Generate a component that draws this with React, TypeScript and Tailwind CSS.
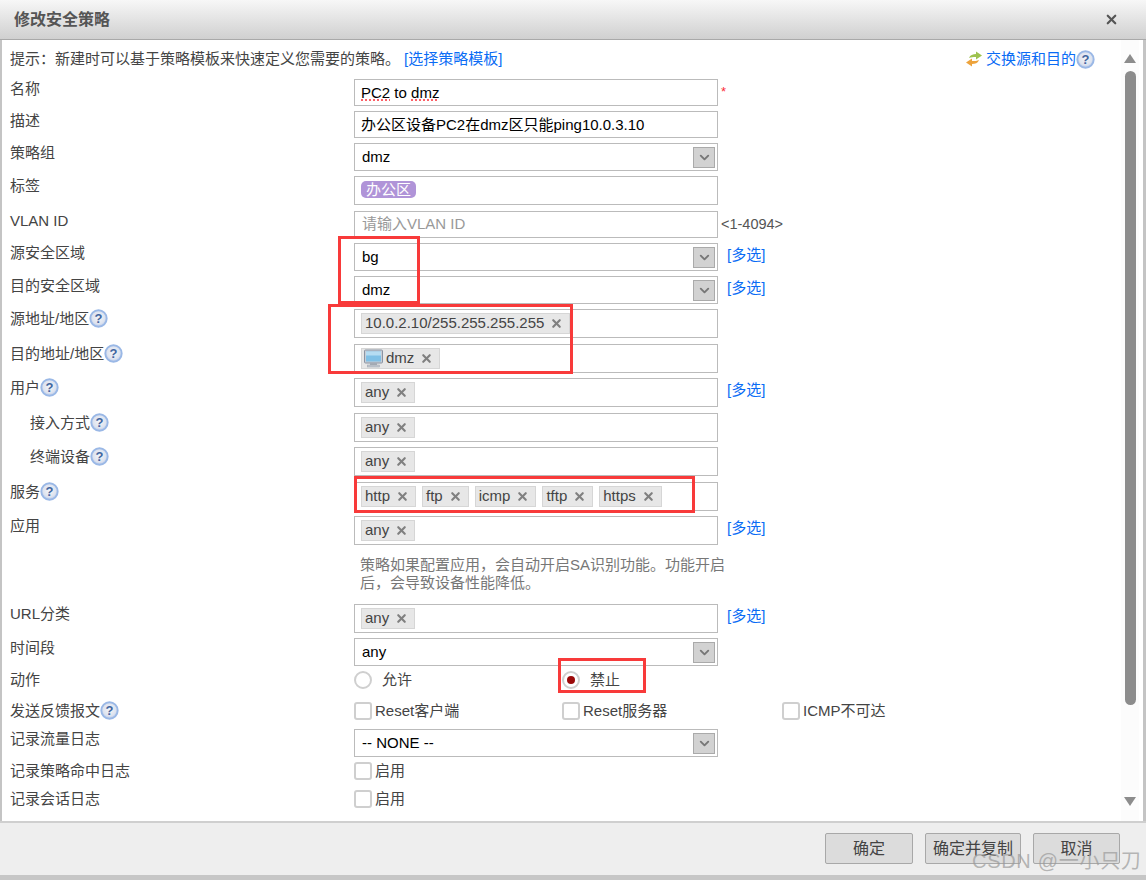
import type { ReactNode } from 'react';
import { X, ChevronDown } from 'lucide-react';

function Help() {
  return (
    <svg width="19" height="19" viewBox="0 0 19 19" className="shrink-0">
      <defs>
        <radialGradient id="helpFill" cx="50%" cy="45%" r="55%">
          <stop offset="0%" stopColor="#f4f5f8" />
          <stop offset="70%" stopColor="#dde3ef" />
          <stop offset="100%" stopColor="#b4c6e8" />
        </radialGradient>
      </defs>
      <circle cx="9.5" cy="9.5" r="8.2" fill="url(#helpFill)" stroke="#9ab8e6" strokeWidth="1.9" />
      <text x="9.5" y="14" textAnchor="middle" fontSize="13" fontWeight="700" fill="#41659f" fontFamily="Liberation Sans">?</text>
    </svg>
  );
}

function Monitor() {
  return (
    <svg width="19" height="19" viewBox="0 0 19 19" className="shrink-0">
      <rect x="0.5" y="1" width="18" height="13" rx="1" fill="#c9ced6" stroke="#8a94a3" />
      <rect x="2" y="2.5" width="15" height="10" fill="#7fc0e6" />
      <rect x="2" y="2.5" width="15" height="4" fill="#b5dcf2" />
      <rect x="6" y="14" width="7" height="2" fill="#a4abb5" />
      <rect x="3.5" y="16" width="12" height="2" fill="#c2c7cf" stroke="#9aa2ad" strokeWidth="0.5" />
    </svg>
  );
}

function SwapIcon() {
  return (
    <svg width="18" height="16" viewBox="0 0 18 16" className="shrink-0">
      <path d="M4 7 C5 4 8 3 11 3 L11 0.5 L17 4.5 L11 8.5 L11 6 C8 6 6 6 4 7Z" fill="#9ec24f" />
      <path d="M14 9 C13 12 10 13 7 13 L7 15.5 L1 11.5 L7 7.5 L7 10 C10 10 12 10 14 9Z" fill="#eda33c" />
    </svg>
  );
}

function Row({ h, label, indent, help, children }: { h: string; label: string; indent?: boolean; help?: boolean; children: ReactNode }) {
  return (
    <div className={`flex shrink-0 ${h}`}>
      <div className={`w-[344px] shrink-0 flex items-start h-[20px] text-[#444] ${indent ? 'pl-[20px]' : ''}`}>
        <span className="leading-[20px]">{label}</span>
        {help && <Help />}
      </div>
      {children}
    </div>
  );
}

function Box({ h, children }: { h: string; children?: ReactNode }) {
  return (
    <div className={`w-[364px] shrink-0 border border-[#bbb] bg-white flex items-center pl-[6px] text-black ${h}`}>
      {children}
    </div>
  );
}

function Select({ value }: { value: string }) {
  return (
    <div className="w-[364px] h-[28px] shrink-0 border border-[#bbb] bg-white flex items-center justify-between pl-[7px] pr-[2px] text-black">
      <span>{value}</span>
      <span className="w-[22px] h-[21px] bg-[#d2d2d2] border border-[#aaa] flex items-center justify-center">
        <ChevronDown size={15} strokeWidth={3} className="text-[#777]" />
      </span>
    </div>
  );
}

function Tag({ text, icon }: { text: string; icon?: boolean }) {
  return (
    <span className="h-[21px] flex items-center gap-[2px] bg-[#e7e7e7] border border-[#d6d6d6] pl-[2px] pr-[6px] text-[#444] shrink-0">
      {icon && <Monitor />}
      <span className="ml-[1px]">{text}</span>
      <X size={13} strokeWidth={4} className="ml-[4px] text-[#808080]" />
    </span>
  );
}

function More() {
  return <a className="ml-[9px] mt-[2px] text-[#0a6cf5] leading-[20px]">[多选]</a>;
}

function Check({ label, w }: { label: string; w?: string }) {
  return (
    <label className={`h-[20px] flex items-center gap-[3px] text-[#444] ${w ?? ''}`}>
      <span className="w-[18px] h-[18px] border-2 border-[#cfcfcf] rounded-[3px] bg-white shrink-0" />
      <span>{label}</span>
    </label>
  );
}

function FooterButton({ w, children }: { w: string; children: ReactNode }) {
  return (
    <button className={`h-[31px] ${w} bg-[#dcdcdc] border border-[#a8a8a8] rounded-[2px] text-[16px] text-[#444]`}>
      {children}
    </button>
  );
}

export default function App() {
  return (
    <div className="relative w-[1146px] h-[880px] overflow-hidden flex flex-col bg-white text-[15px] font-['Liberation_Sans','Noto_Sans_CJK_SC',sans-serif]">
      <div className="h-[40px] shrink-0 bg-gradient-to-b from-[#f7f7f7] to-[#d0d0d0] border-b border-[#a9a9a9] flex items-center justify-between pl-[14px] pr-[27px]">
        <span className="text-[16px] font-bold text-[#555]">修改安全策略</span>
        <X size={15} strokeWidth={3.5} className="text-[#555]" />
      </div>

      <div className="flex-1 min-h-0 flex border-x-2 border-[#c4c4c4] border-r-[3px]">
        <div className="flex-1 min-w-0 pl-[8px] pt-[8px] flex flex-col">
          <div className="h-[31px] shrink-0 flex justify-between pr-[26px] text-[#444]">
            <div className="leading-[22px]">
              提示：新建时可以基于策略模板来快速定义您需要的策略。
              <a className="ml-[4px] text-[#0a6cf5]">[选择策略模板]</a>
            </div>
            <div className="flex items-center h-[22px] text-[#0a6cf5]">
              <SwapIcon />
              <span className="ml-[3px]">交换源和目的</span>
              <Help />
            </div>
          </div>

          <Row h="h-[32px]" label="名称">
            <Box h="h-[27px] pt-[2px]">
              <span className="underline decoration-dotted decoration-red-500">PC2</span>
              <span>&nbsp;to&nbsp;</span>
              <span className="underline decoration-dotted decoration-red-500">dmz</span>
            </Box>
            <span className="ml-[3px] text-red-500 text-[13px] leading-[26px]">*</span>
          </Row>
          <Row h="h-[32px]" label="描述">
            <Box h="h-[27px] pt-[2px]">办公区设备PC2在dmz区只能ping10.0.3.10</Box>
          </Row>
          <Row h="h-[33px]" label="策略组">
            <Select value="dmz" />
          </Row>
          <Row h="h-[35px]" label="标签">
            <Box h="h-[29px]">
              <span className="h-[17px] -mt-[2px] bg-[#b094d8] rounded-[5px] px-[5px] text-white text-[15px] leading-[17px]">办公区</span>
            </Box>
          </Row>
          <Row h="h-[32px]" label="VLAN ID">
            <Box h="h-[27px]">
              <span className="text-[#999] ml-[1px]">请输入VLAN ID</span>
            </Box>
            <span className="ml-[3px] text-[#555] text-[14.5px] leading-[27px]">&lt;1-4094&gt;</span>
          </Row>
          <Row h="h-[33px]" label="源安全区域">
            <Select value="bg" />
            <More />
          </Row>
          <Row h="h-[33px]" label="目的安全区域">
            <Select value="dmz" />
            <More />
          </Row>
          <Row h="h-[35px]" label="源地址/地区" help>
            <Box h="h-[29px]">
              <Tag text="10.0.2.10/255.255.255.255" />
            </Box>
          </Row>
          <Row h="h-[34px]" label="目的地址/地区" help>
            <Box h="h-[29px]">
              <Tag text="dmz" icon />
            </Box>
          </Row>
          <Row h="h-[35px]" label="用户" help>
            <Box h="h-[29px]">
              <Tag text="any" />
            </Box>
            <More />
          </Row>
          <Row h="h-[34px]" label="接入方式" indent help>
            <Box h="h-[29px]">
              <Tag text="any" />
            </Box>
          </Row>
          <Row h="h-[35px]" label="终端设备" indent help>
            <Box h="h-[29px]">
              <Tag text="any" />
            </Box>
          </Row>
          <Row h="h-[34px]" label="服务" help>
            <Box h="h-[29px]">
              <div className="flex gap-[6px] -mt-[1px]">
                <Tag text="http" />
                <Tag text="ftp" />
                <Tag text="icmp" />
                <Tag text="tftp" />
                <Tag text="https" />
              </div>
            </Box>
          </Row>
          <Row h="h-[88px]" label="应用">
            <div className="w-[380px] shrink-0">
              <div className="flex w-[420px]">
                <Box h="h-[29px]">
                  <Tag text="any" />
                </Box>
                <More />
              </div>
              <p className="mt-[11px] ml-[6px] w-[372px] text-[15px] leading-[18px] text-[#777]">
                策略如果配置应用，会自动开启SA识别功能。功能开启后，会导致设备性能降低。
              </p>
            </div>
          </Row>
          <Row h="h-[34px]" label="URL分类">
            <Box h="h-[29px]">
              <Tag text="any" />
            </Box>
            <More />
          </Row>
          <Row h="h-[32px]" label="时间段">
            <Select value="any" />
          </Row>
          <Row h="h-[31px]" label="动作">
            <div className="flex items-center h-[20px]">
              <div className="w-[208px] flex items-center gap-[10px] text-[#444]">
                <span className="w-[18px] h-[18px] rounded-full border-2 border-[#cfcfcf] bg-white" />
                <span>允许</span>
              </div>
              <div className="flex items-center gap-[10px] text-[#444]">
                <span className="w-[18px] h-[18px] rounded-full border-2 border-[#cfcfcf] bg-white flex items-center justify-center">
                  <span className="w-[8px] h-[8px] rounded-full bg-[#9b0a0a]" />
                </span>
                <span>禁止</span>
              </div>
            </div>
          </Row>
          <Row h="h-[28px]" label="发送反馈报文" help>
            <div className="flex items-center h-[20px]">
              <Check label="Reset客户端" w="w-[208px]" />
              <Check label="Reset服务器" w="w-[220px]" />
              <Check label="ICMP不可达" />
            </div>
          </Row>
          <Row h="h-[32px]" label="记录流量日志">
            <Select value="-- NONE --" />
          </Row>
          <Row h="h-[28px]" label="记录策略命中日志">
            <Check label="启用" />
          </Row>
          <Row h="h-[28px]" label="记录会话日志">
            <Check label="启用" />
          </Row>
        </div>

        <div className="w-[18px] shrink-0 mr-[4px] bg-[#fcfcfc] flex flex-col items-center pt-[14px] pb-[15px]">
          <div className="w-0 h-0 border-x-[6px] border-x-transparent border-b-[9px] border-b-[#8c8c8c]" />
          <div className="w-[11px] h-[634px] mt-[8px] rounded-full bg-[#8c8c8c]" />
          <div className="flex-1" />
          <div className="w-0 h-0 border-x-[6px] border-x-transparent border-t-[9px] border-t-[#8c8c8c]" />
        </div>
      </div>

      <div className="h-[59px] shrink-0 bg-[#eeeeee] border-t-2 border-[#cfcfcf] border-b-[5px] border-b-[#c6c6c6] flex justify-end items-start pt-[10px] pr-[26px]">
        <div className="flex gap-[12px]">
          <FooterButton w="w-[88px]">确定</FooterButton>
          <FooterButton w="w-[96px]">确定并复制</FooterButton>
          <FooterButton w="w-[87px]">取消</FooterButton>
        </div>
      </div>

      {/* red marks drawn over the form */}
      <div className="absolute left-[338px] top-[236px] w-[82px] h-[68px] border-[3px] border-[#f83a3a]" />
      <div className="absolute left-[328px] top-[304px] w-[245px] h-[70px] border-[3px] border-[#f83a3a]" />
      <div className="absolute left-[354px] top-[476px] w-[341px] h-[37px] border-[3px] border-[#f83a3a]" />
      <div className="absolute left-[558px] top-[658px] w-[88px] h-[35px] border-[3px] border-[#f83a3a]" />

      <div className="absolute left-[972px] top-[846px] text-[20px] tracking-[0.7px] text-[#9a9a9a]/70">CSDN @一小只刀</div>
    </div>
  );
}
